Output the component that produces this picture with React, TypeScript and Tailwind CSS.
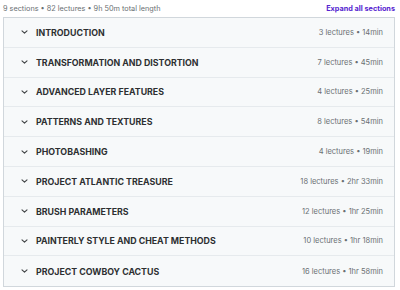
import React from "react";

const sections = [
  ["INTRODUCTION", "3 lectures • 14min"],
  ["TRANSFORMATION AND DISTORTION", "7 lectures • 45min"],
  ["ADVANCED LAYER FEATURES", "4 lectures • 25min"],
  ["PATTERNS AND TEXTURES", "8 lectures • 54min"],
  ["PHOTOBASHING", "4 lectures • 19min"],
  ["PROJECT ATLANTIC TREASURE", "18 lectures • 2hr 33min"],
  ["BRUSH PARAMETERS", "12 lectures • 1hr 25min"],
  ["PAINTERLY STYLE AND CHEAT METHODS", "10 lectures • 1hr 18min"],
  ["PROJECT COWBOY CACTUS", "16 lectures • 1hr 58min"],
];

function Chevron() {
  return (
    <svg width="7" height="6" viewBox="0 0 7 6" className="shrink-0">
      <path d="M1 1.8 L3.5 4.2 L6 1.8" fill="none" stroke="#3e4143" strokeWidth="1.1" strokeLinecap="round" strokeLinejoin="round" />
    </svg>
  );
}

export default function App() {
  return (
    <div className="w-[400px] h-[290px] bg-white px-[3px] pt-[1px]" style={{ fontFamily: "Inter, 'Liberation Sans', sans-serif" }}>
      <div className="flex items-center justify-between h-[16px] pr-[2px]">
        <span className="text-[7.3px] text-[#6a6f73]">9 sections • 82 lectures • 9h 50m total length</span>
        <span className="text-[7.3px] font-bold text-[#5624d0]">Expand all sections</span>
      </div>
      <div className="w-[392px] border border-[#d1d7dc] bg-[#f7f9fa]">
        {sections.map(([t, m], i) => (
          <div
            key={t}
            className={`flex items-center h-[29.8px] pl-[17px] pr-[11px] ${i < sections.length - 1 ? "border-b border-[#e6eaed]" : ""}`}
          >
            <Chevron />
            <span className="ml-[8px] text-[8.8px] font-bold text-[#2d2f31]">{t}</span>
            <span className="ml-auto text-[7.5px] text-[#6a6f73]">{m}</span>
          </div>
        ))}
      </div>
    </div>
  );
}
